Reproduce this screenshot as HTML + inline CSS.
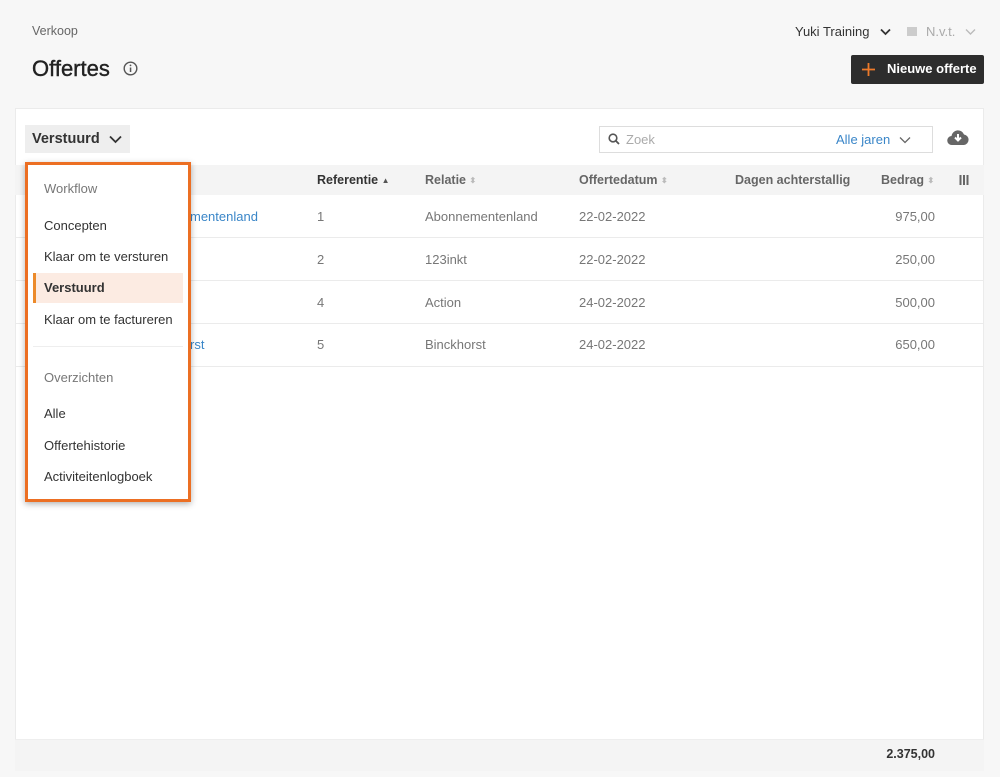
<!DOCTYPE html>
<html><head><meta charset="utf-8"><style>
*{box-sizing:border-box;margin:0;padding:0}
body{width:1000px;height:777px;background:#f7f7f7;font-family:"Liberation Sans",sans-serif;color:#333;position:relative;overflow:hidden;font-size:13px}
.abs{position:absolute;white-space:nowrap}
.card{position:absolute;left:15px;top:108px;width:969px;height:663px;background:#fff;border:1px solid #ebebeb}
.th{position:absolute;left:15px;top:165px;width:969px;height:30px;background:#f4f4f4}
.row{position:absolute;left:15px;width:969px;border-bottom:1px solid #ebebeb}
.gray{color:#777}
.hdr{font-weight:bold;color:#666;font-size:12.5px}
.sort{font-size:8px;color:#bbb;vertical-align:1px}
.menu{position:absolute;left:25px;top:162px;width:166px;height:340px;background:#fff;border:3px solid #ec6f23;box-shadow:0 2px 6px rgba(0,0,0,.3)}
.mi{position:absolute;left:16px;font-size:13px;color:#333}
</style></head><body>
<div class="abs" style="left:32px;top:24px;font-size:12.5px;color:#666">Verkoop</div>
<div class="abs" style="left:32px;top:56px;font-size:22px;color:#222;-webkit-text-stroke:0.4px #222">Offertes</div>
<svg class="abs" style="left:123px;top:61px" width="15" height="15" viewBox="0 0 15 15"><circle cx="7.5" cy="7.5" r="6.3" fill="none" stroke="#555" stroke-width="1.4"/><rect x="6.8" y="6.5" width="1.5" height="4.5" fill="#555"/><circle cx="7.5" cy="4.4" r="0.9" fill="#555"/></svg>
<div class="abs" style="left:795px;top:24px;font-size:13px;color:#333">Yuki Training</div>
<svg class="abs" style="left:880px;top:28px" width="11" height="8"><path d="M1 1.5l4.5 4.5 4.5-4.5" fill="none" stroke="#333" stroke-width="1.8"/></svg>
<div class="abs" style="left:907px;top:27px;width:10px;height:9px;background:#ccc"></div>
<div class="abs" style="left:926px;top:24px;color:#aaa;font-size:13px">N.v.t.</div>
<svg class="abs" style="left:965px;top:28px" width="11" height="8"><path d="M1 1.5l4.5 4.5 4.5-4.5" fill="none" stroke="#bbb" stroke-width="1.4"/></svg>
<div class="abs" style="left:851px;top:55px;width:133px;height:29px;background:#2d2d2d;border-radius:2px"></div>
<svg class="abs" style="left:861px;top:62px" width="15" height="15"><path d="M7.5 1v13M1 7.5h13" stroke="#ee7a2a" stroke-width="1.8"/></svg>
<div class="abs" style="left:887px;top:61px;color:#fff;font-weight:bold;font-size:13px">Nieuwe offerte</div>

<div class="card"></div>
<div class="abs" style="left:25px;top:125px;width:105px;height:28px;background:#eee"></div>
<div class="abs" style="left:32px;top:131px;font-size:14.5px;font-weight:bold;color:#333">Verstuurd</div>
<svg class="abs" style="left:109px;top:135px" width="13" height="9"><path d="M1 1.5l5.5 5.5 5.5-5.5" fill="none" stroke="#333" stroke-width="1.8"/></svg>
<div class="abs" style="left:599px;top:126px;width:334px;height:27px;border:1px solid #ddd;background:#fff"></div>
<svg class="abs" style="left:608px;top:133px" width="12" height="12"><circle cx="5" cy="5" r="3.8" fill="none" stroke="#555" stroke-width="1.6"/><path d="M8 8l3 3" stroke="#555" stroke-width="1.8"/></svg>
<div class="abs" style="left:626px;top:132px;color:#aaa;font-size:13px">Zoek</div>
<div class="abs" style="left:836px;top:132px;color:#3a86c8;font-size:13px">Alle jaren</div>
<svg class="abs" style="left:899px;top:136px" width="12" height="8"><path d="M1 1.5l5 5 5-5" fill="none" stroke="#666" stroke-width="1.3"/></svg>
<svg class="abs" style="left:947px;top:129px" width="22" height="17" viewBox="0 0 22 17"><path d="M5 16a4.5 4.5 0 0 1-.5-9A6.5 6.5 0 0 1 17 5.5a5.3 5.3 0 0 1 0 10.5z" fill="#666"/><path d="M11 5v6M8 8.5l3 3 3-3" fill="none" stroke="#fff" stroke-width="2"/></svg>

<div class="th"></div>
<div class="abs hdr" style="left:317px;top:173px;color:#333">Referentie <span class="sort" style="color:#555">▲</span></div>
<div class="abs hdr" style="left:425px;top:173px">Relatie <span class="sort">⬍</span></div>
<div class="abs hdr" style="left:579px;top:173px">Offertedatum <span class="sort">⬍</span></div>
<div class="abs hdr" style="left:735px;top:173px">Dagen achterstallig</div>
<div class="abs hdr" style="left:881px;top:173px">Bedrag <span class="sort">⬍</span></div>
<svg class="abs" style="left:959px;top:175px" width="10" height="10"><path d="M1.5 0v10M5 0v10M8.5 0v10" stroke="#666" stroke-width="2"/></svg>

<div class="row" style="top:195px;height:43px"></div>
<div class="row" style="top:238px;height:43px"></div>
<div class="row" style="top:281px;height:43px"></div>
<div class="row" style="top:324px;height:43px"></div>

<div class="abs" style="left:190px;top:209px;color:#3a86c8">mentenland</div>
<div class="abs" style="left:190px;top:337px;color:#3a86c8">rst</div>
<div class="abs gray" style="left:317px;top:209px">1</div><div class="abs gray" style="left:425px;top:209px">Abonnementenland</div><div class="abs gray" style="left:579px;top:209px">22-02-2022</div><div class="abs gray" style="right:65px;top:209px">975,00</div>
<div class="abs gray" style="left:317px;top:252px">2</div><div class="abs gray" style="left:425px;top:252px">123inkt</div><div class="abs gray" style="left:579px;top:252px">22-02-2022</div><div class="abs gray" style="right:65px;top:252px">250,00</div>
<div class="abs gray" style="left:317px;top:295px">4</div><div class="abs gray" style="left:425px;top:295px">Action</div><div class="abs gray" style="left:579px;top:295px">24-02-2022</div><div class="abs gray" style="right:65px;top:295px">500,00</div>
<div class="abs gray" style="left:317px;top:337px">5</div><div class="abs gray" style="left:425px;top:337px">Binckhorst</div><div class="abs gray" style="left:579px;top:337px">24-02-2022</div><div class="abs gray" style="right:65px;top:337px">650,00</div>

<div class="abs" style="left:15px;top:739px;width:969px;height:32px;background:#f4f4f4;border-top:1px solid #eee"></div>
<div class="abs" style="right:65px;top:747px;font-weight:bold;color:#333;font-size:12.5px">2.375,00</div>

<div class="menu">
 <div class="mi" style="top:16px;color:#777">Workflow</div>
 <div class="mi" style="top:53px">Concepten</div>
 <div class="mi" style="top:84px">Klaar om te versturen</div>
 <div style="position:absolute;left:5px;top:108px;width:150px;height:30px;background:#fcebe2;border-left:3px solid #ec8a2a"></div>
 <div class="mi" style="top:115px;font-weight:bold">Verstuurd</div>
 <div class="mi" style="top:147px">Klaar om te factureren</div>
 <div style="position:absolute;left:5px;top:181px;width:150px;border-top:1px solid #eee"></div>
 <div class="mi" style="top:205px;color:#777">Overzichten</div>
 <div class="mi" style="top:241px">Alle</div>
 <div class="mi" style="top:273px">Offertehistorie</div>
 <div class="mi" style="top:304px">Activiteitenlogboek</div>
</div>
</body></html>
